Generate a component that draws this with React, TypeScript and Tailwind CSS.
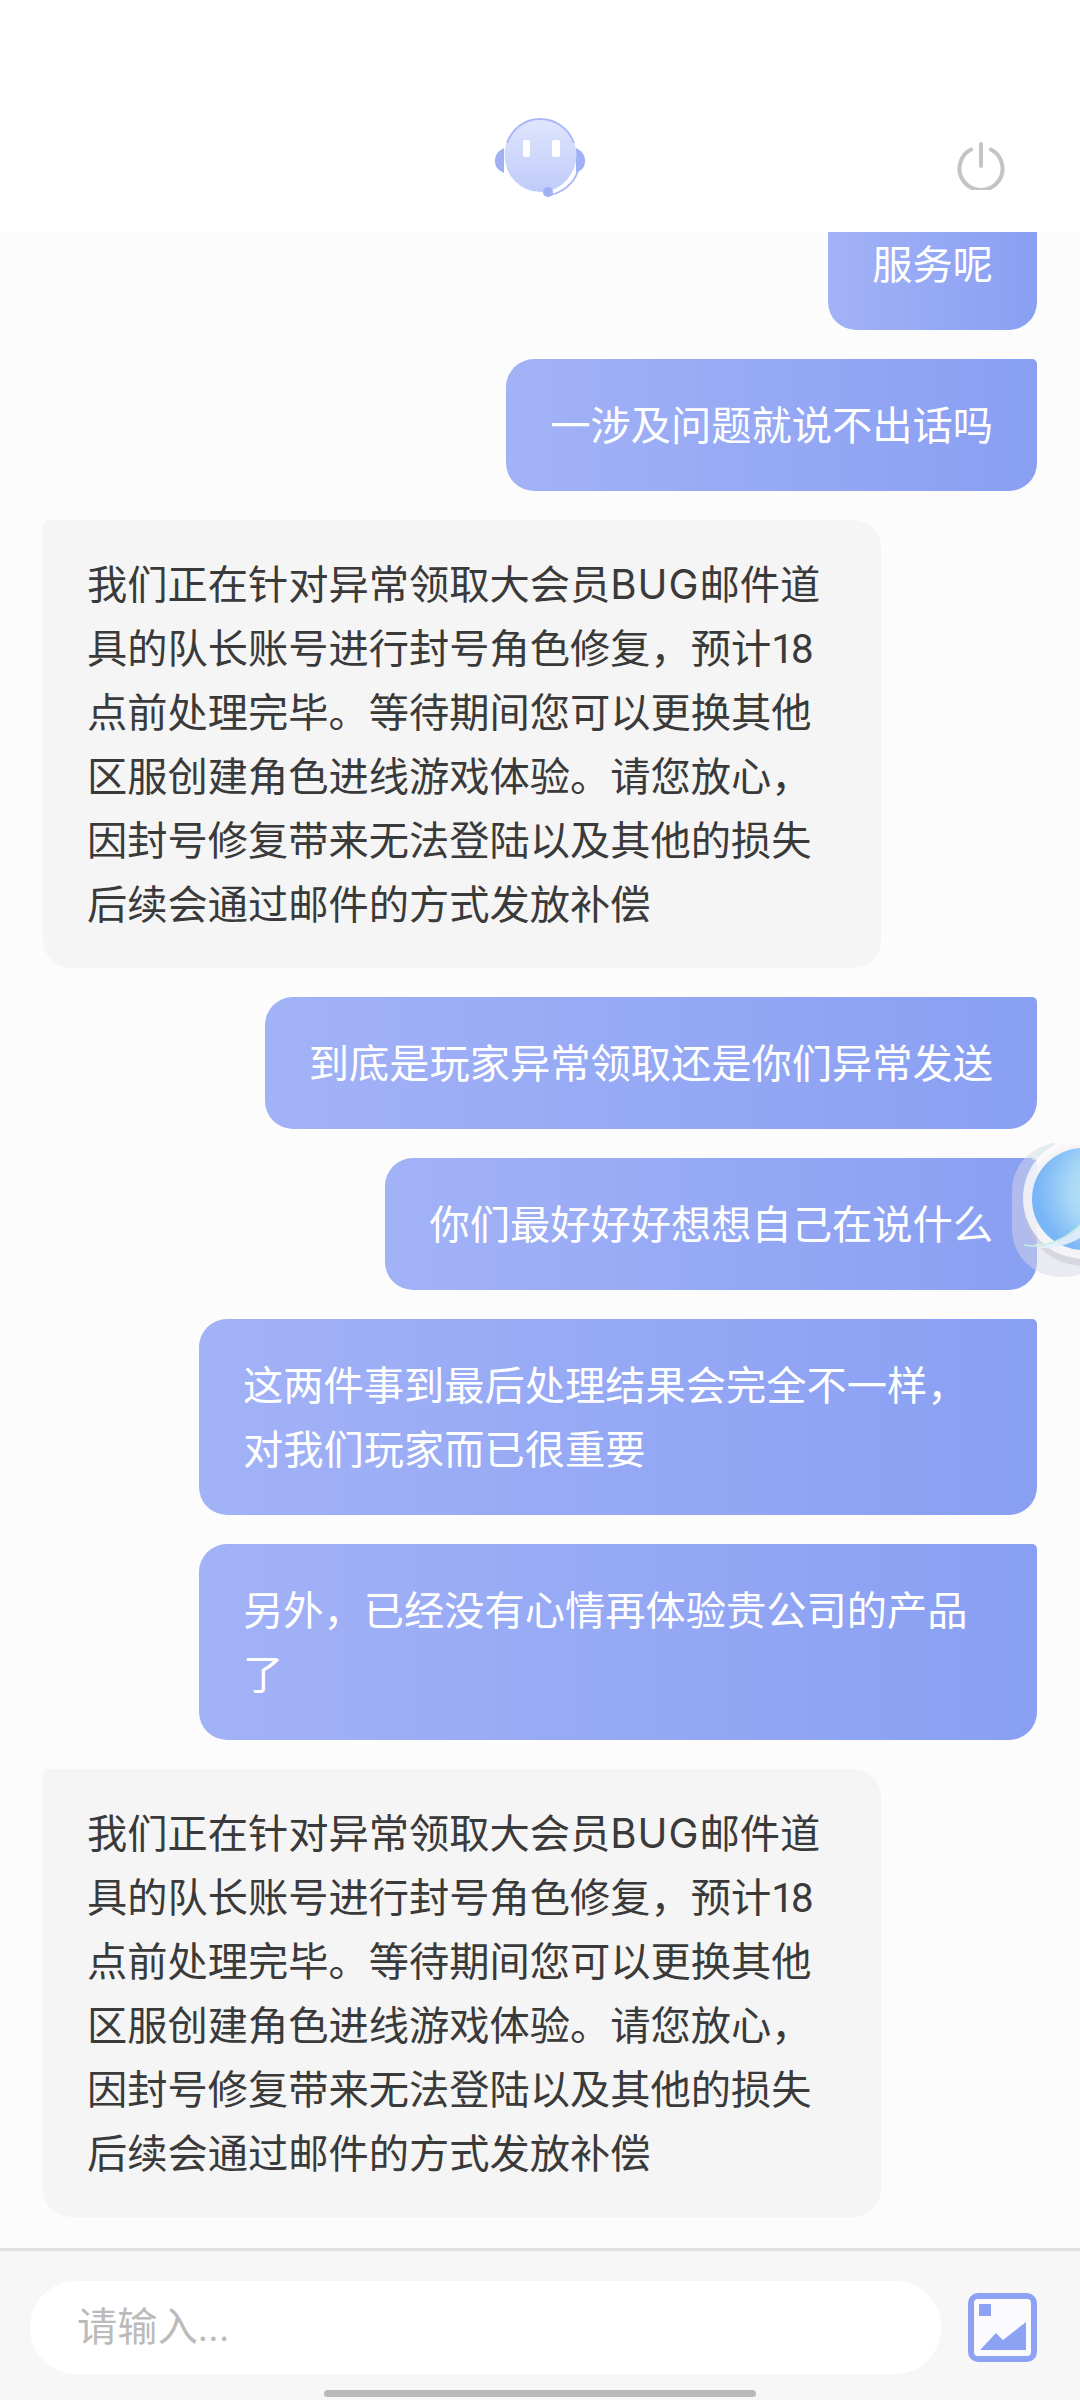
import { useState } from "react";

function RobotLogo() {
  return (
    <svg className="blur-[0.6px]" width="90" height="81" viewBox="0 0 90 81" fill="none">
      <defs>
        <linearGradient id="head" x1="0" y1="0" x2="0" y2="1">
          <stop offset="0" stopColor="#e0e6fd" />
          <stop offset="1" stopColor="#bfcbf9" />
        </linearGradient>
      </defs>
      <path d="M0 44c0-6 3-10 9-13v25c-6-3-9-6-9-12z" fill="#9fb0f5" />
      <path d="M90 44c0-6-3-10-9-13v25c6-3 9-6 9-12z" fill="#9fb0f5" />
      <ellipse cx="45.500" cy="38" rx="36" ry="37" fill="url(#head)" />
      <path d="M12 26C18 10 31 2 45 2c14 0 28 8 34 24" stroke="#aab9f6" strokeWidth="2" />
      <rect x="28" y="23" width="7" height="17" rx="2" fill="#ffffff" />
      <rect x="57" y="23" width="8" height="17" rx="2" fill="#ffffff" />
      <path d="M79 54c-5 12-14 19-26 22" stroke="#ffffff" strokeWidth="3" />
      <path d="M83 54c-5 14-17 22-31 25" stroke="#aab9f6" strokeWidth="2" />
      <circle cx="53" cy="75" r="5" fill="#9fb0f5" />
    </svg>
  );
}

function PowerIcon() {
  return (
    <svg className="blur-[0.4px]" width="48" height="48" viewBox="0 0 48 48" fill="none" stroke="#c4c4c4" strokeLinecap="round">
      <path d="M14 7.500a21.500 21.500 0 1 0 20 0" strokeWidth="4" />
      <path d="M24 2v22" strokeWidth="4" />
    </svg>
  );
}

function ImageIcon() {
  return (
    <svg width="70" height="70" viewBox="0 0 70 70" fill="none">
      <rect x="3" y="3" width="63" height="63" rx="7" fill="#fbfbff" stroke="#8da2f3" strokeWidth="6" />
      <rect x="11" y="11" width="12" height="12" fill="#8da2f3" />
      <path d="M12 57l16-17 7 7 23-18v28z" fill="#8da2f3" />
    </svg>
  );
}

// floating assistant ball on the right edge, sits over the bubbles
function FloatBall() {
  return (
    <svg className="absolute top-[1125px] right-0" width="90" height="165" viewBox="0 0 90 165" fill="none">
      <defs>
        <radialGradient id="ball" cx="0.7" cy="0.42" r="0.65">
          <stop offset="0" stopColor="#c6eef0" />
          <stop offset="0.55" stopColor="#a5d6f6" />
          <stop offset="1" stopColor="#79b5f7" />
        </radialGradient>
      </defs>
      <rect x="22" y="18" width="100" height="134" rx="48" fill="#d8d8e8" fillOpacity="0.5" />
      <circle cx="94" cy="80" r="61" fill="#c4c4cc" fillOpacity="0.5" />
      <circle cx="94" cy="73" r="61" fill="#fdfdff" fillOpacity="0.75" />
      <circle cx="93" cy="74" r="51" fill="url(#ball)" />
      <path d="M43 35c5-7 12-13 20-17" stroke="#d5f3ec" strokeWidth="1.500" />
      <path d="M44 119c18 1 34-6 46-18v12c-14 8-28 11-40 10z" fill="#e6eefb" fillOpacity="0.9" />
      <path d="M34 120c20 4 40-5 56-20" stroke="#bfeedd" strokeWidth="1.500" />
    </svg>
  );
}

function UserBubble({ children }: { children: string }) {
  return (
    <div className="max-w-[838px] self-end rounded-[28px] rounded-tr-[5px] bg-linear-to-r from-[#a2b2f7] to-[#899ff2] px-[44px] pt-[36px] pb-[32px] text-[40.25px] leading-[64px] text-white">
      {children}
    </div>
  );
}

function AgentBubble() {
  return (
    <div className="w-[838px] self-start rounded-[28px] rounded-tl-[5px] bg-[#f5f5f5] px-[44px] pt-[34px] pb-[30px] text-[40.25px] leading-[64px] text-[#3a3a3a]">
      <div className="whitespace-nowrap">
        我们正在针对异常领取大会员<span className="font-['Inter'] leading-none tracking-[1px]">BUG</span>邮件道
      </div>
      <div className="whitespace-nowrap">
        具的队长账号进行封号角色修复，预计<span className="tracking-[-3px]">18</span>
      </div>
      <div className="whitespace-nowrap">点前处理完毕。等待期间您可以更换其他</div>
      <div className="whitespace-nowrap">区服创建角色进线游戏体验。请您放心，</div>
      <div className="whitespace-nowrap">因封号修复带来无法登陆以及其他的损失</div>
      <div className="whitespace-nowrap">后续会通过邮件的方式发放补偿</div>
    </div>
  );
}

export default function App() {
  const [text, setText] = useState("");

  return (
    <div className="relative flex h-[2400px] w-[1080px] flex-col overflow-hidden bg-[#fcfcfc] font-['Roboto','Noto_Sans_CJK_SC',sans-serif]">
      {/* 顶部 */}
      <header className="z-10 flex h-[232px] shrink-0 items-start justify-between bg-white pl-[495px] pr-[75px] pt-[117px]">
        <RobotLogo />
        <div className="pt-[25px]">
          <PowerIcon />
        </div>
      </header>

      {/* 消息列表 */}
      <main className="flex min-h-0 flex-1 flex-col justify-end gap-[29px] px-[43px] pb-[31px]">
        <UserBubble>服务呢</UserBubble>
        <UserBubble>一涉及问题就说不出话吗</UserBubble>
        <AgentBubble />
        <UserBubble>到底是玩家异常领取还是你们异常发送</UserBubble>
        <UserBubble>你们最好好好想想自己在说什么</UserBubble>
        <UserBubble>这两件事到最后处理结果会完全不一样，对我们玩家而已很重要</UserBubble>
        <UserBubble>另外，已经没有心情再体验贵公司的产品了</UserBubble>
        <AgentBubble />
      </main>

      {/* 输入栏 */}
      <footer className="flex h-[152px] shrink-0 flex-col border-t-[3px] border-[#e0e0e0] bg-[#f7f7f7] px-[30px] pt-[30px]">
        <div className="flex items-center justify-between pr-[12px]">
          <input
            value={text}
            onChange={(e) => setText(e.target.value)}
            placeholder="请输入..."
            className="h-[93px] w-[911px] rounded-[46px] bg-white px-[47px] text-[40.25px] text-[#333333] outline-none placeholder:text-[#bbbbbb]"
          />
          <ImageIcon />
        </div>
        <div className="mx-auto mt-[16px] h-[7px] w-[432px] rounded-full bg-[#b9b9b9]" />
      </footer>

      <FloatBall />
    </div>
  );
}
